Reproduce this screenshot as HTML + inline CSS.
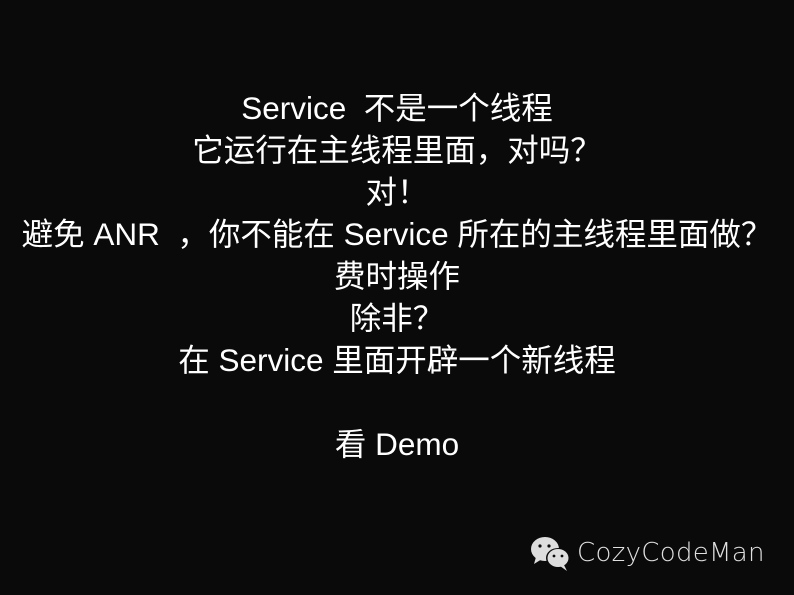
<!DOCTYPE html>
<html><head><meta charset="utf-8"><style>
html,body{margin:0;padding:0;background:#0a0a0a;width:794px;height:595px;overflow:hidden}
.t{position:absolute;top:87px;left:0;width:794px;text-align:center;color:#fff;font-family:"Liberation Sans","WenQuanYi Zen Hei","Noto Sans CJK SC",sans-serif;font-size:31.5px}
.t div{height:42px;line-height:42px;white-space:pre}
.wm{position:absolute;left:530px;top:535px;display:flex;align-items:center;color:#e0e0e0;font-family:"DejaVu Sans","Liberation Sans",sans-serif;font-size:26px;font-weight:300}
</style></head><body>
<div class="t"><div>Service  不是一个线程</div><div>它运行在主线程里面，对吗？</div><div>对！</div><div>避免 ANR  ，你不能在 Service 所在的主线程里面做？</div><div>费时操作</div><div>除非？</div><div>在 Service 里面开辟一个新线程</div><div></div><div>看 Demo</div></div>
<div class="wm"><svg width="42" height="36" viewBox="0 0 42 36">
<ellipse cx="15" cy="14" rx="14" ry="12" fill="#ddd"/>
<path d="M6 22 L4 29 L12 24Z" fill="#ddd"/>
<ellipse cx="28" cy="23" rx="12" ry="10" fill="#0a0a0a"/>
<ellipse cx="28" cy="23" rx="10.5" ry="9" fill="#ddd"/>
<path d="M34 30 L37 36 L30 31Z" fill="#ddd"/>
<circle cx="10" cy="11" r="1.6" fill="#0a0a0a"/><circle cx="19" cy="11" r="1.6" fill="#0a0a0a"/>
<circle cx="24" cy="21" r="1.4" fill="#0a0a0a"/><circle cx="32" cy="21" r="1.4" fill="#0a0a0a"/>
</svg><span style="margin-left:5px;letter-spacing:0.3px">CozyCodeMan</span></div>
</body></html>
